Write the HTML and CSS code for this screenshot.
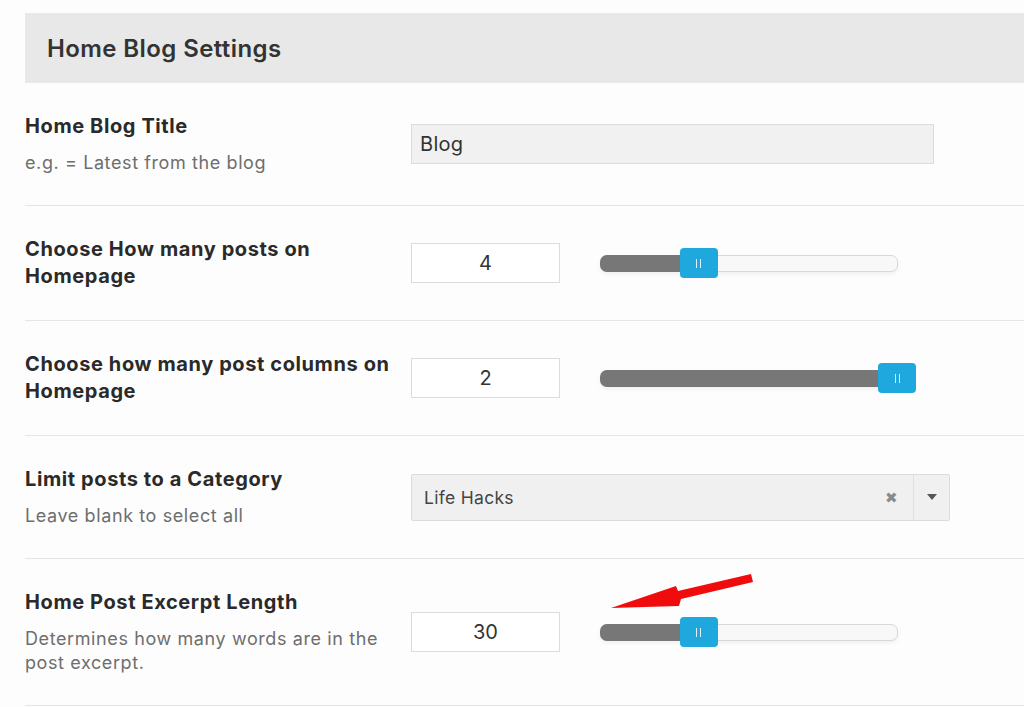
FILE: index.html
```html
<!DOCTYPE html>
<html lang="en">
<head>
<meta charset="utf-8">
<title>Home Blog Settings</title>
<link rel="stylesheet" href="styles.css">
</head>
<body>
<div class="settings">
  <div class="panel-head"><h2 class="panel-title">Home Blog Settings</h2></div>

  <div class="row">
    <div class="label-col">
      <div class="label">Home Blog Title</div>
      <div class="desc">e.g. = Latest from the blog</div>
    </div>
    <div class="field">
      <input class="text-input" type="text" value="Blog">
    </div>
  </div>

  <div class="row">
    <div class="label-col">
      <div class="label">Choose How many posts on Homepage</div>
    </div>
    <div class="field">
      <input class="num-input" type="text" value="4">
      <div class="slider">
        <div class="slider-fill" style="width:33%"></div>
        <span class="slider-handle" style="left:33%"><i></i><i></i></span>
      </div>
    </div>
  </div>

  <div class="row">
    <div class="label-col">
      <div class="label">Choose how many post columns on Homepage</div>
    </div>
    <div class="field">
      <input class="num-input" type="text" value="2">
      <div class="slider">
        <div class="slider-fill" style="width:100%"></div>
        <span class="slider-handle" style="left:100%"><i></i><i></i></span>
      </div>
    </div>
  </div>

  <div class="row">
    <div class="label-col">
      <div class="label">Limit posts to a Category</div>
      <div class="desc">Leave blank to select all</div>
    </div>
    <div class="field">
      <div class="select">
        <span class="select-value">Life Hacks</span>
        <span class="select-clear">&#x2716;</span>
        <span class="select-arrow"><svg width="10" height="6" viewBox="0 0 10 6"><path d="M0 0h10L5 6z" fill="#555"/></svg></span>
      </div>
    </div>
  </div>

  <div class="row">
    <div class="label-col">
      <div class="label">Home Post Excerpt Length</div>
      <div class="desc">Determines how many words are in the post excerpt.</div>
    </div>
    <div class="field">
      <input class="num-input" type="text" value="30">
      <div class="slider">
        <div class="slider-fill" style="width:33%"></div>
        <span class="slider-handle" style="left:33%"><i></i><i></i></span>
        <svg class="pointer" width="160" height="50" viewBox="0 0 160 50">
          <path d="M152 1 L154 9 L82 26 L80 33 L12 35 L77 13 L79 18 Z" fill="#f00c0c"/>
        </svg>
      </div>
    </div>
  </div>
</div>
</body>
</html>
```

FILE: styles.css
```css
* { box-sizing: border-box; }

html, body {
  margin: 0;
  background: #fdfdfd;
}

body {
  font-family: Inter, "Open Sans", "Liberation Sans", sans-serif;
  color: #2c2c2c;
  overflow: hidden;
}

.settings {
  padding: 13px 0 0 25px;
}

.panel-head {
  height: 70px;
  background: #e8e8e8;
  display: flex;
  align-items: center;
  padding-left: 22px;
}

.panel-title {
  margin: 0;
  font-size: 24px;
  font-weight: 600;
  color: #333;
  letter-spacing: 0.4px;
}

.row {
  display: grid;
  grid-template-columns: 370px 1fr;
  column-gap: 16px;
  align-items: center;
  padding: 30px 0;
  border-bottom: 1px solid #e6e6e6;
}

.label {
  font-size: 20px;
  line-height: 27px;
  font-weight: 700;
  letter-spacing: 0.6px;
  color: #2a2a2a;
}

.desc {
  margin-top: 11px;
  font-size: 18px;
  line-height: 24px;
  letter-spacing: 0.6px;
  color: #6e6e6e;
}

.field {
  display: flex;
  align-items: center;
  gap: 40px;
}

.text-input {
  width: 523px;
  height: 40px;
  border: 1px solid #dcdcdc;
  background: #f1f1f1;
  padding: 0 8px;
  font: 20px Inter, "Open Sans", "Liberation Sans", sans-serif;
  letter-spacing: 0.3px;
  color: #333;
  outline: none;
}

.num-input {
  width: 149px;
  height: 40px;
  border: 1px solid #dcdcdc;
  background: #fff;
  text-align: center;
  font: 20px Inter, "Open Sans", "Liberation Sans", sans-serif;
  color: #333;
  outline: none;
  padding: 0;
}

.slider {
  position: relative;
  width: 298px;
  height: 17px;
  border: 1px solid #d8d8d8;
  border-radius: 7px;
  background: #f8f8f8;
  box-shadow: 0 2px 4px rgba(0,0,0,0.06);
}

.slider-fill {
  position: absolute;
  left: -1px;
  top: -1px;
  bottom: -1px;
  background: #777;
  border-radius: 7px 0 0 7px;
}

.slider-handle {
  position: absolute;
  top: 50%;
  width: 38px;
  height: 30px;
  margin: -15px 0 0 -19px;
  background: #1fa8dd;
  border-radius: 4px;
  display: flex;
  justify-content: center;
  align-items: center;
  gap: 3px;
}

.slider-handle i {
  width: 1px;
  height: 9px;
  background: rgba(255,255,255,0.85);
}

.pointer {
  position: absolute;
  left: -2px;
  top: -52px;
}

.select {
  width: 539px;
  height: 47px;
  border: 1px solid #dcdcdc;
  border-radius: 2px;
  background: #f0f0f0;
  display: flex;
  align-items: center;
}

.select-value {
  flex: 1;
  padding-left: 12px;
  font-size: 17.5px;
  letter-spacing: 0.3px;
  color: #444;
}

.select-clear {
  width: 36px;
  margin-right: 4px;
  text-align: center;
  font-size: 15px;
  color: #8a8a8a;
}

.select-arrow {
  width: 36px;
  height: 100%;
  border-left: 1px solid #e0e0e0;
  display: flex;
  align-items: center;
  justify-content: center;
}
```
